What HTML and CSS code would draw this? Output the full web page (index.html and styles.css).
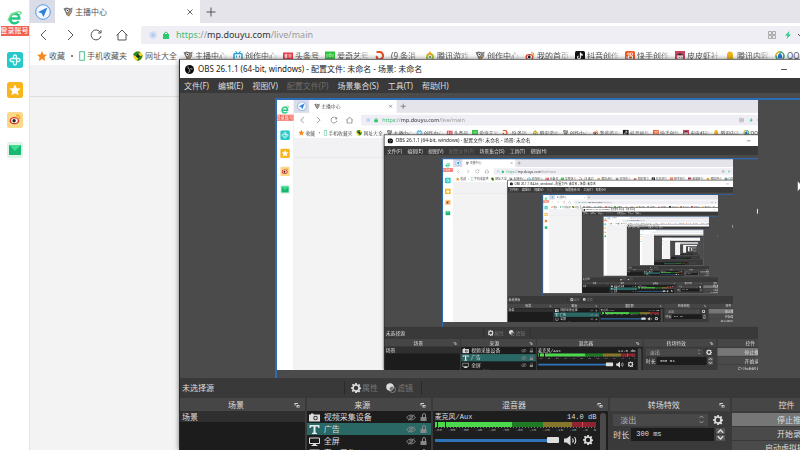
FILE: index.html
```html
<!DOCTYPE html>
<html lang="zh-CN">
<head>
<meta charset="utf-8">
<title>主播中心</title>
<link rel="stylesheet" href="styles.css">
</head>
<body>
<svg class="sprite" aria-hidden="true">
  <symbol id="gear" viewBox="0 0 16 16"><path fill="currentColor" fill-rule="evenodd" d="M6.7 0h2.6l.4 2.2 1.5.6 1.9-1.3 1.8 1.8-1.3 1.9.6 1.5 2.3.4v2.6l-2.3.4-.6 1.5 1.3 1.9-1.8 1.8-1.9-1.3-1.5.6L9.3 16H6.700l-.4-2.300-1.500-.6-1.900 1.300-1.800-1.800 1.300-1.900-.6-1.500L0 9.300V6.700l2.200-.4.6-1.500-1.300-1.900 1.800-1.800 1.900 1.300 1.500-.6zM8 4.500a3.500 3.500 0 1 0 0 7 3.500 3.500 0 0 0 0-7z"/></symbol>
  <symbol id="pop" viewBox="0 0 12 12"><path fill="#d4d4d4" d="M1 2h7v2H3v3H1zM5 6h6v5H5z"/><path fill="#464646" d="M7 8h3v1.500H7z"/></symbol>
  <symbol id="eye" viewBox="0 0 20 14"><path fill="none" stroke="currentColor" stroke-width="1.800" d="M1 7Q10-3 19 7Q10 17 1 7zM4 13 17 1"/><circle cx="10" cy="7" r="2.800" fill="none" stroke="currentColor" stroke-width="1.500"/></symbol>
  <symbol id="lock" viewBox="0 0 14 16"><path fill="currentColor" d="M1 8h12v8H1z"/><path fill="none" stroke="currentColor" stroke-width="2" d="M5 8V4a3 3 0 0 1 6 0v4"/></symbol>
  <symbol id="badger" viewBox="0 0 20 20"><path fill="#777" d="M1 3 7 1l8 2 4-2-1 9-6 9-5-3-2-5z"/><path fill="#f5f1e8" d="m7 4 5 1-2 6-4-2zM14 6l3-1-1 5-3 2z"/><path fill="#e4953b" d="m8 13 6-2-2 6z"/><path fill="#333" d="M8 6h2v2H8zM14 7h2v2h-2z"/></symbol>
  <symbol id="weibo" viewBox="0 0 20 20"><ellipse cx="9" cy="12" rx="8" ry="6" fill="#d9331f"/><ellipse cx="9" cy="12" rx="5.500" ry="4" fill="#fff"/><circle cx="8.500" cy="12" r="2.800" fill="#222"/><path fill="none" stroke="#f39a22" stroke-width="2" d="M12 3q6-1 6 6M12 6q3 0 3 3"/></symbol>
</svg>

<div class="screen">
  <div class="browser">
    <nav class="rail" aria-label="侧边栏">
      <div class="account">
        <svg class="logo" viewBox="0 0 28 28"><path fill="none" stroke="#27c98b" stroke-width="4.500" d="M5 16h18c0-12-16-12-17-1-1 11 11 12 16 6"/><path fill="none" stroke="#7be08c" stroke-width="2.500" d="M2 21C3 10 18 1 26 4c2 2-1 4-3 5"/></svg>
        <a class="login" href="#">登录账号</a>
      </div>
      <svg class="app" viewBox="0 0 16 16"><rect width="16" height="16" rx="2.500" fill="#25c9c8"/><path fill="none" stroke="#e8ffff" stroke-width="1.300" d="M6.500 6.500V4.500a1.500 1.500 0 0 1 3 0v7a1.500 1.500 0 0 1-3 0v-2h-2a1.500 1.500 0 0 1 0-3h7a1.500 1.500 0 0 1 0 3h-2"/></svg>
      <svg class="app" viewBox="0 0 16 16"><rect width="16" height="16" rx="2.500" fill="#fbb51c"/><path fill="#fff" d="m8 2.500 1.700 3.700 4 .4-3 2.700.9 4L8 11.200l-3.600 2.100.9-4-3-2.700 4-.4z"/></svg>
      <svg class="app" viewBox="0 0 16 16"><rect width="16" height="16" rx="2.500" fill="#fbd98a"/><use href="#weibo" x="2" y="1" width="12" height="13"/></svg>
      <svg class="app" viewBox="0 0 16 16"><rect width="16" height="16" rx="2.500" fill="#dff3e6"/><path fill="#18b871" d="M2 3h12v10H2z"/><path fill="#3fdd94" d="M2 3h12L8 9z"/></svg>
    </nav>
    <div class="main">
      <div class="tabs">
        <button class="compass" aria-label="导航"><svg viewBox="0 0 16 16"><circle cx="8" cy="8" r="7.300" fill="#f2f8ff" stroke="#5b9ae0"/><path fill="#2f80dc" d="M12.500 3.500 3 8l3.600 1.200L8.500 13z"/></svg></button>
        <div class="tab"><svg class="ico"><use href="#badger"/></svg><span>主播中心</span><button aria-label="关闭标签页"><svg viewBox="0 0 8 8"><path stroke="#666" d="m1.500 1.500 5 5m0-5-5 5"/></svg></button></div>
        <button class="newtab" aria-label="新标签页"><svg viewBox="0 0 10 10"><path stroke="#555" d="M5 .5v9M.5 5h9"/></svg></button>
      </div>
      <div class="bar">
        <button aria-label="后退"><svg viewBox="0 0 12 12"><path d="M8 1 3 6l5 5"/></svg></button>
        <button aria-label="前进"><svg viewBox="0 0 12 12"><path d="m4 1 5 5-5 5"/></svg></button>
        <button aria-label="刷新"><svg viewBox="0 0 12 12"><path d="M10.500 3.500A5 5 0 1 0 11 7M11 1v3H8"/></svg></button>
        <button aria-label="主页"><svg viewBox="0 0 12 12"><path d="M.5 6.500 6 1l5.500 5.500M2 5v6h8V5"/></svg></button>
        <div class="address">
          <svg class="shield" viewBox="0 0 8 8"><circle cx="4" cy="4" r="3.700" fill="#cfdcf6"/><circle cx="4" cy="4" r="1.600" fill="#b3c8ee"/></svg>
          <svg class="shield" viewBox="0 0 8 8"><path fill="#2cc96b" d="M1 3h6v5H1z"/><path fill="none" stroke="#2cc96b" d="M2.500 3.500V2q1.500-2 3 0v1.500"/></svg>
          <span class="url"><span class="scheme">https:</span><span class="dim">//</span>mp.douyu.com<span class="dim">/live/main</span></span>
          <svg class="shield" viewBox="0 0 8 8"><path fill="none" stroke="#aaa" d="M.5.5h3v3h-3zm4 0h3v3h-3zm-4 4h3v3h-3zm4 0h3v3h-3z"/></svg>
          <svg class="bolt" viewBox="0 0 8 8"><path fill="#2acb88" d="M5.500 0 1 4.500h2.500L2.500 8 7 3.500H4.500z"/></svg>
          <svg class="caret" viewBox="0 0 6 8"><path fill="none" stroke="#555" d="m1 3 2 2 2-2"/></svg>
        </div>
      </div>
      <div class="marks">
        <a href="#"><svg class="ico" viewBox="0 0 20 20"><path fill="#f48a1d" d="m10 0 3 7 7 .6-5.300 4.700L16.500 20 10 15.800 3.500 20l1.800-7.700L0 7.600 7 7z"/></svg><span>收藏</span></a>
        <i class="dot"></i>
        <a href="#" class="phone"><svg viewBox="0 0 6 10"><rect x=".7" y=".7" width="4.600" height="8.600" fill="#fff" stroke="#4cc287"/></svg><span>手机收藏夹</span></a>
        <a href="#"><svg class="ico" viewBox="0 0 20 20"><circle cx="10" cy="10" r="9.500" fill="#f5d61f"/><path fill="#26872f" d="M0 8Q4-2 15 2 8 6 12 9q5 3 7-2-1 14-12 12Q13 15 8 12 2 8 0 8z"/><path stroke="#222" stroke-width="2.500" d="M6 10h8M10 6v8"/></svg><span>网址大全</span></a>
        <a href="#"><svg class="ico"><use href="#badger"/></svg><span class="fade">主播中心</span></a>
        <a href="#"><svg class="ico" viewBox="0 0 20 20"><rect x="2" y="5" width="16" height="13" rx="2" fill="#fff" stroke="#26a5d8" stroke-width="3"/><path stroke="#26a5d8" stroke-width="2" d="m5 0 3 4m7-4-3 4M7 9v4m6-4v4"/></svg><span class="fade">创作中心</span></a>
        <a href="#"><svg class="ico" viewBox="0 0 20 20"><path fill="#ee3a47" d="M0 3h20v15H0z"/><path stroke="#fff" stroke-width="2" d="M3 8h6M3 12h6M6 6v9M11 8h6m-6 4h6"/></svg><span>头条号</span></a>
        <a href="#"><svg class="ico" viewBox="0 0 20 20"><path fill="#2bc63c" d="M0 1h20v18H0z"/><path fill="none" stroke="#a7f0a5" stroke-width="2" d="M4 6v8M8 6h4v6H8zM16 6v8"/></svg><span class="fade">爱奇艺号</span></a>
        <a href="#"><svg class="ico" viewBox="0 0 20 20"><path fill="none" stroke="#e55328" stroke-width="4" d="M3 2h8q6 3 5 9-2 7-9 6-5-3-3-7"/></svg><span class="fade gap">(9 条消</span></a>
        <a href="#"><svg class="ico" viewBox="0 0 20 20"><circle cx="10" cy="12" r="8" fill="#b9c52c"/><path fill="#f0a12b" d="m10 0 5 9H5z"/><circle cx="10" cy="12" r="4" fill="#fff"/><circle cx="10" cy="12" r="2" fill="#3b8f49"/></svg><span class="fade">腾讯游戏</span></a>
        <a href="#"><svg class="ico"><use href="#badger"/></svg><span class="fade">创作中心</span></a>
        <a href="#"><svg class="ico"><use href="#weibo"/></svg><span class="fade">我的首页</span></a>
        <a href="#"><svg class="ico" viewBox="0 0 20 20"><rect width="20" height="20" rx="3" fill="#151515"/><path fill="none" stroke="#fff" stroke-width="2.500" d="M11 3v10a3 3 0 1 1-4-3M11 4q1 4 5 4"/></svg><span class="fade">抖音创作</span></a>
        <a href="#"><svg class="ico" viewBox="0 0 20 20"><rect width="20" height="20" rx="3" fill="#f15a24"/><path fill="none" stroke="#fff" stroke-width="2" d="M7 10h8v6H7zM4 11v4"/><circle cx="7" cy="6" r="2" fill="none" stroke="#fff" stroke-width="1.500"/><circle cx="13" cy="6" r="2.500" fill="none" stroke="#fff" stroke-width="1.500"/></svg><span class="fade">快手创作</span></a>
        <a href="#"><svg class="ico" viewBox="0 0 20 20"><path fill="#c9455f" d="M0 0h20v20H0z"/><circle cx="10" cy="12" r="6" fill="#f3dfe0"/><path fill="#4c2b38" d="M3 8q6-7 14 0l-7 1zM8 12h1v2H8zm4 0h1v2h-1z"/></svg><span class="fade">皮皮虾社</span></a>
        <a href="#"><svg class="ico" viewBox="0 0 20 20"><path fill="#f0b41c" d="M4 14V8q0-7 6-7t6 7v6l3 4H1z"/></svg><span class="fade">腾讯内容</span></a>
        <a href="#"><svg class="ico" viewBox="0 0 20 20"><circle cx="10" cy="10" r="8" fill="#fff" stroke="#39a25c" stroke-width="3"/><path fill="none" stroke="#f3b72c" stroke-width="3" d="M2 10a8 8 0 0 1 8-8"/><path fill="#2777d8" d="M10 4q6 4 4 11H6Q4 8 10 4z"/></svg><span>QQ</span></a>
      </div>
      <div class="page"><div class="pagehead"></div></div>
    </div>
  </div>

  <div class="obs">
    <div class="title">
      <svg viewBox="0 0 18 18"><circle cx="9" cy="9" r="9" fill="#0c0c0c"/><path fill="none" stroke="#c9c9c9" stroke-width="1.600" d="M6 3q-1 5 3 5.500M15 8q-5-2-6 1.500M6 15q5-1 3.500-5"/></svg>
      <span>OBS 26.1.1 (64-bit, windows) - 配置文件: 未命名 - 场景: 未命名</span>
      <button aria-label="最小化"></button>
    </div>
    <div class="menu">
      <button>文件(F)</button><button>编辑(E)</button><button>视图(V)</button><button disabled>配置文件(P)</button><button>场景集合(S)</button><button>工具(T)</button><button>帮助(H)</button>
    </div>
    <div class="preview"><div class="canvas"><div class="mini"></div></div></div>
    <div class="context">
      <span class="none">未选择源</span>
      <button><svg><use href="#gear"/></svg>属性</button>
      <button><svg viewBox="0 0 20 20"><circle cx="13" cy="13" r="6" fill="none" stroke="#999" stroke-width="1.500"/><circle cx="8" cy="8" r="7.500" fill="#dedede"/><path fill="#777" d="M13 7a6 6 0 0 0-6 6q5 4 8-3z"/></svg>滤镜</button>
    </div>
    <div class="docks">
      <section>
        <h2>场景<svg><use href="#pop"/></svg></h2>
        <div class="list"><div class="scene">场景</div></div>
      </section>
      <section>
        <h2>来源<svg><use href="#pop"/></svg></h2>
        <div class="list">
          <div class="source"><svg class="kind" viewBox="0 0 22 18"><path fill="#ddd" d="M0 3h4V1h5v2h13v14H0z"/><circle cx="13" cy="10" r="4.500" fill="#333"/><circle cx="13" cy="10" r="2.500" fill="#ddd"/></svg><span>视频采集设备</span><svg class="eye"><use href="#eye"/></svg><svg class="lock"><use href="#lock"/></svg></div>
          <div class="source on"><svg class="kind" viewBox="0 0 22 18"><path fill="#e4eeee" d="M1 0h20v6h-2l-2-3h-4v12l3 1v2H6v-2l3-1V3H5L3 6H1z"/></svg><span>广告</span><svg class="eye"><use href="#eye"/></svg><svg class="lock"><use href="#lock"/></svg></div>
          <div class="source"><svg class="kind" viewBox="0 0 22 18"><path fill="none" stroke="#ddd" stroke-width="2" d="M1 2h20v11H1z"/><path fill="#ddd" d="M8 13h6v3h3v2H5v-2h3z"/></svg><span>全屏</span><svg class="eye"><use href="#eye"/></svg><svg class="lock"><use href="#lock"/></svg></div>
          <div class="source"><svg class="kind" viewBox="0 0 22 18"><path fill="none" stroke="#ddd" stroke-width="2" d="M1 2h20v14H1z"/></svg><span>窗口采集</span><svg class="eye"><use href="#eye"/></svg><svg class="lock"><use href="#lock"/></svg></div>
        </div>
      </section>
      <section>
        <h2>混音器<svg><use href="#pop"/></svg></h2>
        <div class="mixer">
          <div class="channel">
            <div class="name"><span>麦克风/Aux</span><span>14.0 dB</span></div>
            <div class="meter"></div>
            <div class="scale"><span>-60</span><span>-55</span><span>-50</span><span>-45</span><span>-40</span><span>-35</span><span>-30</span><span>-25</span><span>-20</span><span>-15</span><span>-10</span><span>-5</span><span>0</span></div>
            <div class="volume"><input type="range" aria-label="音量" value="100"><svg class="speaker" viewBox="0 0 28 20"><path fill="#ddd" d="M0 6h5l8-6v20l-8-6H0z"/><path fill="none" stroke="#ddd" stroke-width="2.200" d="M17 6q3 4 0 8M21 3q5 7 0 14"/></svg><svg class="cog"><use href="#gear"/></svg></div>
          </div>
          <div class="scroll"></div>
        </div>
      </section>
      <section>
        <h2>转场特效<svg><use href="#pop"/></svg></h2>
        <div class="trans">
          <div class="line"><div class="pick"><select aria-label="转场特效"><option>淡出</option></select><svg viewBox="0 0 8 10"><path fill="none" stroke="#aaa" d="m2 3 2-2 2 2M2 7l2 2 2-2"/></svg></div><svg class="cog"><use href="#gear"/></svg></div>
          <label class="line">时长<input type="text" value="300 ms"><svg class="spin" viewBox="0 0 10 14"><path fill="#5a5a5a" d="M0 0h10v6.500H0zM0 7.500h10V14H0z"/><path fill="none" stroke="#ddd" stroke-width="1.500" d="m2 5 3-3 3 3M2 9l3 3 3-3"/></svg></label>
        </div>
      </section>
      <section>
        <h2>控件<svg><use href="#pop"/></svg></h2>
        <div class="controls"><button class="live">停止推流</button><button>开始录制</button><button>启动虚拟摄像机</button></div>
      </section>
    </div>
  </div>
  <svg class="cursor" viewBox="0 0 8 12"><path fill="#fff" stroke="#444" stroke-width=".5" d="M.5 0v10.500L3 8l2 4 1.500-1L5 7.500h3z"/></svg>
</div>
<script src="preview.js"></script>
</body>
</html>
```
FILE: preview.js
```js
// The preview captures the display it is shown on, so it repeats inside itself.
const DEPTH = 11;
const LEGIBLE = 4; // labels are left out of copies deeper than this
const source = document.querySelector('.screen').cloneNode(true);
let slot = document.querySelector('.mini');
for (let i = 0; i < DEPTH; i++) {
  const copy = source.cloneNode(true);
  if (i === LEGIBLE) copy.classList.add('far');
  slot.setAttribute('aria-hidden', 'true');
  slot.inert = true;
  slot.append(copy);
  slot = copy.querySelector('.mini');
}
```
FILE: styles.css
```css
* { box-sizing: border-box; }
body {
  margin: 0;
  overflow: hidden;
  font: 8px/12px "Noto Sans", "Noto Sans CJK SC", sans-serif;
}
button, input, select { font: inherit; color: inherit; border: 0; padding: 0; margin: 0; background: none; border-radius: 0; }
a { color: inherit; text-decoration: none; }
svg { display: block; flex: none; }
.sprite { position: absolute; width: 0; height: 0; }

.screen { position: relative; width: 100vw; height: 100vh; overflow: hidden; background: #f3f3f4; color: #555; }
.browser { display: flex; height: 100%; }

.rail { width: 30px; flex: none; background: #fff; border-right: 1px solid #e6e6e8; display: flex; flex-direction: column; align-items: center; gap: 14px; }
.account { display: flex; flex-direction: column; align-items: center; padding-top: 10px; margin-bottom: 2px; }
.logo { width: 15px; height: 15px; }
.login { background: #f26250; color: #fff; font-size: 7px; line-height: 10px; width: 28px; text-align: center; white-space: nowrap; margin-top: 1px; }
.app { width: 16px; height: 16px; }

.main { flex: 1; min-width: 0; display: flex; flex-direction: column; }
.tabs { display: flex; height: 23px; background: #e5e4ea; }
.compass { width: 25px; background: #dadde7; display: grid; place-items: center; }
.compass svg { width: 16px; height: 16px; }
.tab { width: 145px; background: #fff; display: flex; align-items: center; padding: 0 6px 0 8px; gap: 2px; }
.tab span { flex: 1; }
.tab button svg { width: 8px; height: 8px; }
.ico { width: 10px; height: 10px; }
.newtab { width: 22px; display: grid; place-items: center; }
.newtab svg { width: 10px; height: 10px; }

.bar { display: flex; height: 24px; background: #fff; align-items: center; padding-left: 8px; gap: 14px; }
.bar button svg { width: 12px; height: 12px; fill: none; stroke: #555; }
.address { flex: 1; height: 18px; margin-left: -1px; background: #efeef4; border-radius: 2px 0 0 2px; display: flex; align-items: center; padding-left: 8px; gap: 5px; }
.shield { width: 8px; height: 8px; }
.url { flex: 1; font-size: 9px; color: #333; padding-left: 1px; white-space: nowrap; }
.scheme { color: #48bd7c; }
.dim { color: #999; }
.bolt { width: 8px; height: 8px; margin-left: 3px; }
.caret { width: 6px; height: 8px; margin-right: -3px; }

.marks { display: flex; height: 18px; flex: none; background: #fff; align-items: center; padding-left: 7px; gap: 6px; white-space: nowrap; overflow: hidden; }
.marks a { display: flex; align-items: center; gap: 2px; flex: none; }
.marks .phone svg { width: 6px; height: 10px; }
.marks .fade { width: 32px; mask-image: linear-gradient(90deg, #000 65%, #0003); }
.marks .gap { padding-left: 4px; }
.dot { width: 2px; height: 2px; border-radius: 50%; background: #555; }
.page { flex: 1; background: #f3f3f4; }
.pagehead { height: 32px; background: #f2f2f4; border-bottom: 1px solid #dedee0; }

.obs {
  position: absolute; left: 179px; top: 59px; right: -54px; bottom: 0;
  display: flex; flex-direction: column;
  background: #3a3a3a; color: #ddd;
  border-left: 1px solid #2c2c2c; border-top: 1px solid #777;
  box-shadow: 0 0 5px #0008;
}
.title { display: flex; align-items: center; gap: 4px; height: 18px; background: #fff; color: #222; padding: 0 67px 0 5px; }
.title svg { width: 9px; height: 9px; }
.title span { flex: 1; }
.title button { width: 6px; height: 1px; background: #555; }
.menu { display: flex; height: 15px; background: #393939; padding: 0 4px; gap: 9px; }
.menu button:disabled { color: #6c6c6c; }

.preview { flex: 1; min-height: 0; background: #4b4b4b; padding: 5px 0 0 95px; display: flex; }
.canvas { flex: 1; min-width: 0; overflow: hidden; border-top: 2px solid #2b6bb5; border-left: 2px solid #2b6bb5; }
.mini { --scale: .603; width: calc(100vw * var(--scale)); height: calc(100vh * var(--scale)); margin: -1px 0 0 -1px; overflow: hidden; }
.mini > .screen { transform: scale(var(--scale)); transform-origin: 0 0; }
.far :is(span, a, h2, button, select, input, label, .scene) { visibility: hidden; }
.far .context, .far .scale { visibility: hidden; }

.context { display: flex; align-items: center; height: 20px; padding-left: 2px; background: #393939; }
.none { width: 162px; }
.context button { display: flex; align-items: center; gap: 1px; height: 14px; color: #777; padding-left: 6px; }
.context button:first-of-type { border-left: 1px solid #2a2a2a; }
.context button:last-of-type { border-right: 1px solid #2a2a2a; padding: 0 8px; }
.context svg { width: 10px; height: 10px; color: #ddd; }

.docks { display: grid; grid-template-columns: 125fr 124fr 176fr 120fr 122fr; gap: 2px; height: 52px; overflow: hidden; }
.docks section { min-width: 0; display: flex; flex-direction: column; }
.docks h2 { margin: 0; font-size: 8px; line-height: 13px; height: 13px; font-weight: 400; background: #464646; display: grid; grid-template-columns: 1fr 8px; align-items: center; justify-items: center; padding-right: 5px; }
.docks h2 svg { width: 6px; height: 6px; justify-self: end; }
.list { flex: 1; background: #1c1c1c; overflow: hidden; }
.scene { height: 11px; line-height: 11px; padding-left: 2px; background: #2f2f2f; }
.source { height: 12px; display: flex; align-items: center; padding: 0 4px 0 2px; gap: 4px; }
.source span { flex: 1; }
.source.on { background: #296865; }
.kind { width: 11px; height: 9px; }
.eye { width: 10px; height: 7px; color: #888; }
.lock { width: 7px; height: 8px; color: #888; }

.mixer { flex: 1; background: #1e1e1e; display: flex; padding: 1px 2px 0; gap: 4px; overflow: hidden; }
.channel { flex: 1; min-width: 0; }
.name { display: flex; justify-content: space-between; font: 7px/10px "Liberation Mono", "Noto Sans CJK SC", monospace; }
.meter { height: 5px; background: linear-gradient(90deg, #4bd84b 1%, #111 1% 2%, #4bd84b 2% 6%, #111 6% 7%, #4bd84b 7% 48%, #1f7a24 48% 67%, #85772a 67% 85%, #8c2530 85% 91%, #e04450 91% 92%, #8c2530 92%); }
.scale { display: flex; justify-content: space-between; font: 4px/6px "Liberation Mono", monospace; color: #aaa; background: repeating-linear-gradient(90deg, #777 0 1px, transparent 1px 3px) top / 100% 1px no-repeat; }
.volume { display: flex; align-items: center; height: 14px; gap: 5px; padding-right: 3px; }
.volume input { flex: 1; min-width: 0; height: 8px; appearance: none; background: linear-gradient(#2f74b8, #2f74b8) center / 100% 3px no-repeat; }
.volume input::-webkit-slider-thumb { appearance: none; width: 12px; height: 6px; background: #ddd; border-radius: 1px; }
.speaker { width: 14px; height: 11px; }
.cog { width: 10px; height: 10px; color: #ddd; }
.scroll { flex: none; width: 6px; background: #4a4a4a; border-radius: 3px; margin-top: 1px; }

.trans { padding: 2px 4px 0 3px; display: flex; flex-direction: column; gap: 2px; }
.line { display: flex; align-items: center; height: 13px; gap: 5px; white-space: nowrap; }
.pick { flex: 1; display: flex; align-items: center; background: #484848; height: 12px; padding: 0 3px 0 7px; }
.pick select { appearance: none; flex: 1; min-width: 0; color: #bbb; }
.pick svg { width: 7px; height: 9px; }
.line .cog { margin-right: 3px; }
label.line { gap: 2px; }
.line input { flex: 1; min-width: 0; height: 13px; background: #1c1c1c; padding-left: 5px; font: 7px/13px "Liberation Mono", monospace; }
.spin { width: 9px; height: 13px; margin-right: 1px; }

.controls { padding-top: 2px; display: flex; flex-direction: column; gap: 1px; }
.controls button { height: 13px; flex: none; background: #4a4a4a; }
.controls .live { background: #767676; }

.cursor { position: absolute; right: -5px; top: 181px; width: 8px; height: 12px; }
```
